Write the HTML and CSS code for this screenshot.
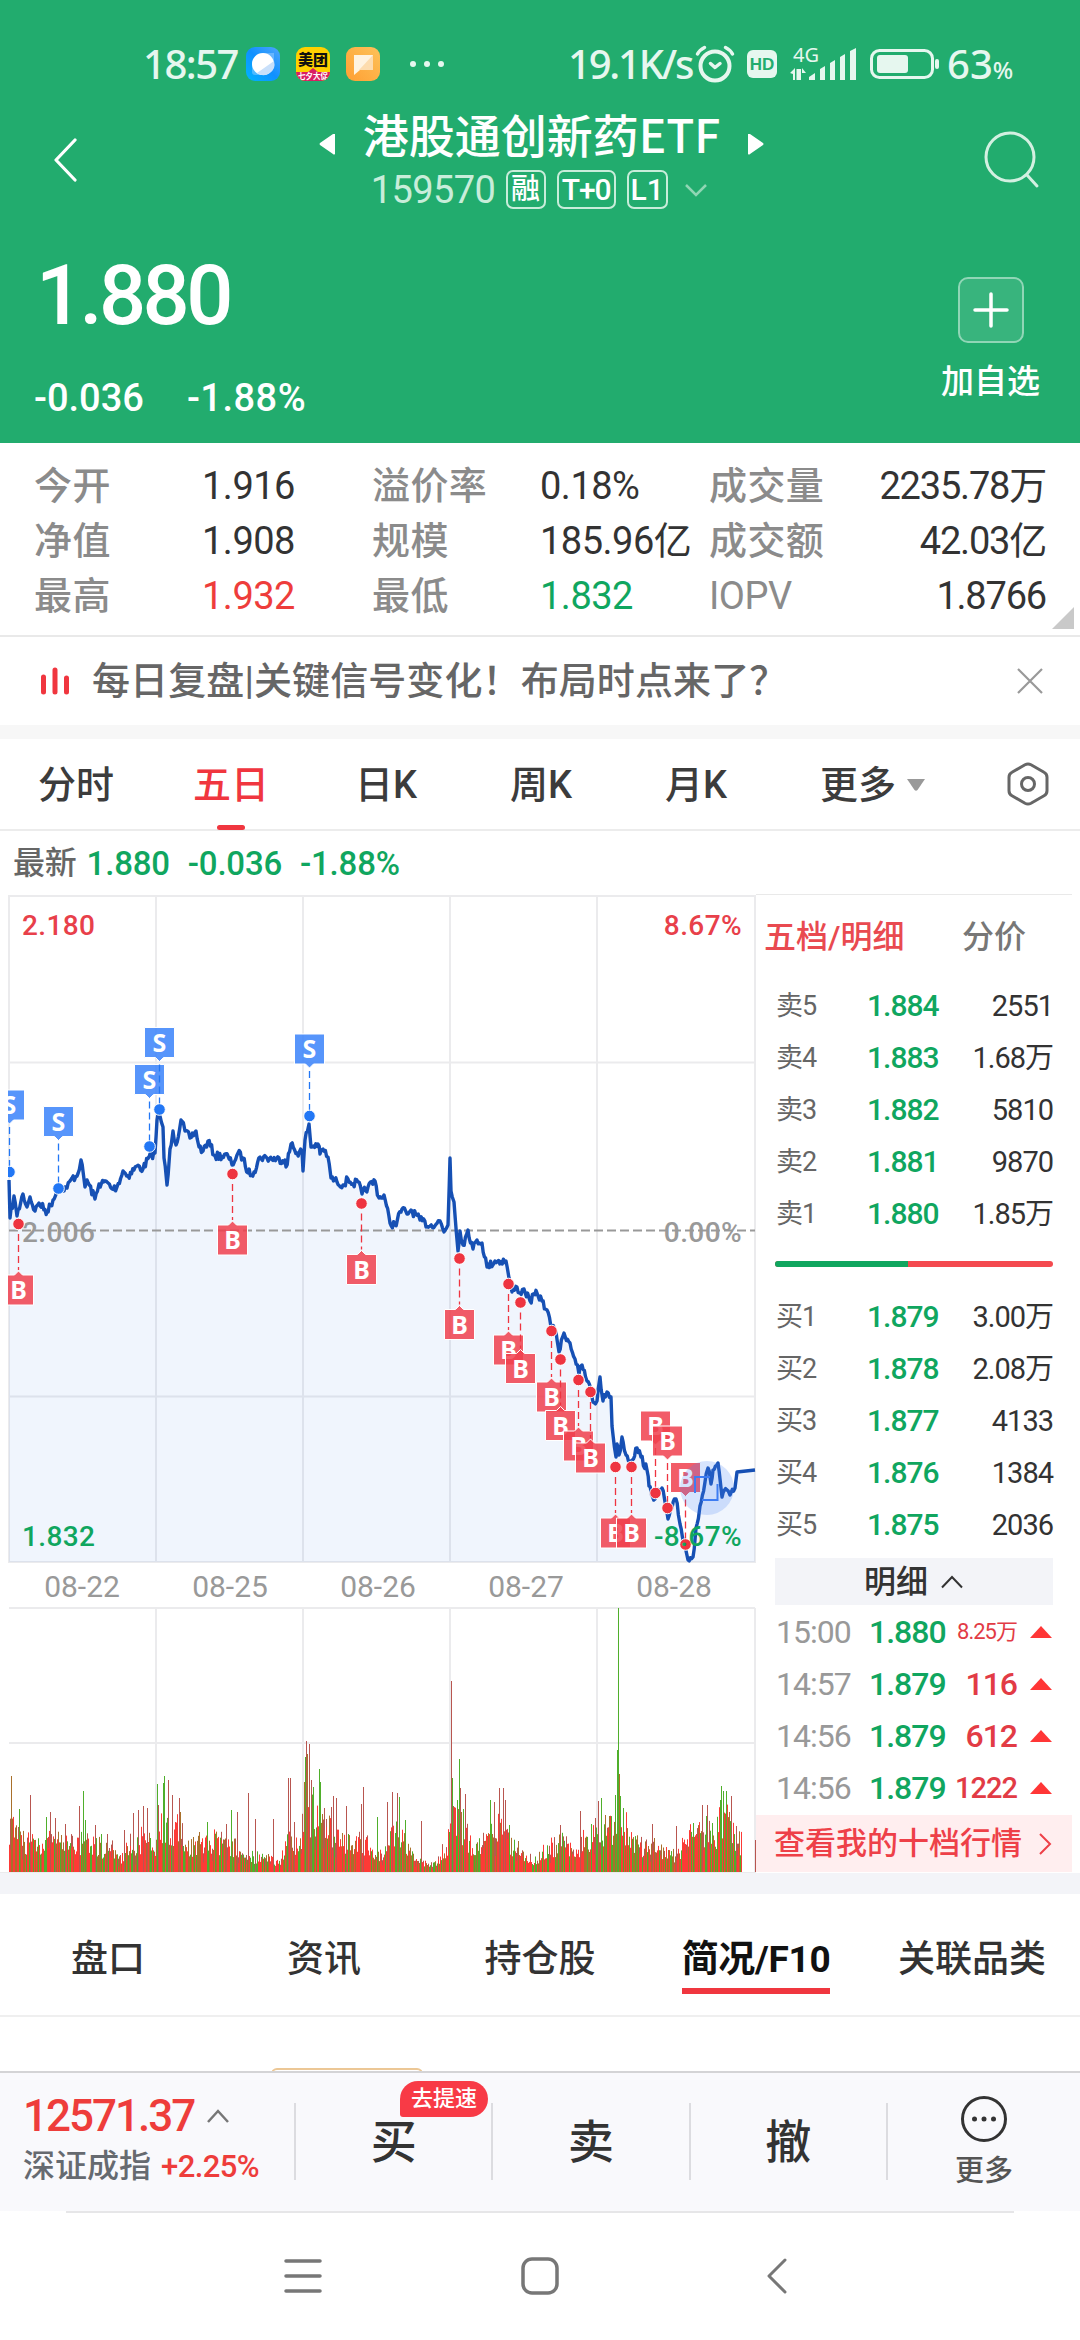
FILE: index.html
```html
<!DOCTYPE html>
<html lang="zh-CN">
<head>
  <meta charset="UTF-8" />
  <meta name="viewport" content="width=device-width, initial-scale=1.0"/>
  <title>港股通创新药ETF 159570</title>
  <link rel="stylesheet" href="styles.css">
</head>
<body>
  <header class="header">
    <div class="status-bar">
      <span class="clock">18:57</span>
      <div class="status-apps">
        <svg width="34" height="34" viewBox="0 0 34 34">
          <defs>
            <linearGradient id="blueApp" x1="0" y1="1" x2="1" y2="0"><stop offset="0" stop-color="#00b4ff"/><stop offset="0.5" stop-color="#1090ff"/><stop offset="1" stop-color="#4fa6fb"/></linearGradient>
            <linearGradient id="orangeApp" x1="0" y1="1" x2="1" y2="0"><stop offset="0" stop-color="#ff9f33"/><stop offset="1" stop-color="#fdc25a"/></linearGradient>
          </defs>
          <rect width="34" height="34" rx="9" fill="url(#blueApp)"/>
          <path d="M6 17a11 11 0 0 1 11-11h11v11a11 11 0 0 1-11 11H9q-3 0-3-3z" fill="#cfe6ff" opacity=".35"/>
          <circle cx="17" cy="17" r="11" fill="#fff"/>
          <path d="M28 14a11 11 0 0 1-17 12z" fill="#c9e0fa"/>
        </svg>
        <svg width="34" height="34" viewBox="0 0 34 34">
          <clipPath id="appClip"><rect width="34" height="34" rx="9"/></clipPath>
          <g clip-path="url(#appClip)">
            <rect width="34" height="34" fill="#ffd100"/>
            <path d="M0 25h12l5-4 5 4h12v9H0z" fill="#d91e63"/>
            <text x="17" y="18" class="app-name">美团</text>
            <text x="17" y="32" class="app-sub">七夕大促</text>
          </g>
        </svg>
        <svg width="34" height="34" viewBox="0 0 34 34">
          <rect width="34" height="34" rx="9" fill="url(#orangeApp)"/>
          <path d="M8 8h19v15H14l-6 5z" fill="#fff3e0"/>
          <path d="M27 8v15H13z" fill="#fddcae"/>
        </svg>
      </div>
      <svg class="status-dots" width="34" height="8" viewBox="0 0 34 8" fill="#e6f7ef"><circle cx="3" cy="4" r="3"/><circle cx="17" cy="4" r="3"/><circle cx="31" cy="4" r="3"/></svg>
      <span class="speed">19.1K/s</span>
      <svg class="alarm" width="40" height="38" viewBox="0 0 40 38" fill="none" stroke="#e6f7ef" stroke-width="4" stroke-linecap="round">
        <circle cx="20" cy="21" r="14.5"/>
        <path d="M2.500 9q2-4 7-6.500M37.500 9q-2-4-7-6.500" stroke-width="3.500"/>
        <path d="M15.500 18.500l4.500 4 5-4" stroke-width="3.500" stroke-linejoin="round"/>
      </svg>
      <span class="hd">HD</span>
      <svg class="signal" width="68" height="44" viewBox="0 -4 68 44" fill="#e6f7ef">
        <text x="3" y="16" class="net-type">4G</text>
        <path d="M0 27l5-5v12H3v-6zM9 23v11h-2.500V23zM9 23h2v11H9zM12 22l4 5h-4z"/>
        <path d="M19 31l6-4v7h-6zM30 23l5-3v14h-5zM40 17l5-3v20h-5zM50 11l5-3v26h-5zM60 5l6-3v32h-6z"/>
      </svg>
      <svg class="battery" width="70" height="32" viewBox="0 0 70 32">
        <rect x="1.500" y="2.500" width="61" height="27" rx="8" fill="none" stroke="#e6f7ef" stroke-width="3"/>
        <rect x="7" y="7" width="31" height="18" rx="3" fill="#e6f7ef"/>
        <rect x="65" y="11" width="4" height="10" rx="2" fill="#e6f7ef"/>
      </svg>
      <span class="charge">63<small>%</small></span>
    </div>

    <div class="title-row">
      <svg class="back" width="24" height="44" viewBox="0 0 24 44"><path d="M22 2L3 22l19 20" fill="none" stroke="#fff" stroke-width="3.200" stroke-linecap="round" stroke-linejoin="round"/></svg>
      <div class="title-box">
        <div class="title">
          <svg width="16" height="22" viewBox="0 0 16 22"><path d="M16 1v20q-1 1-2 0L1 12q-1-1 0-2L14 1z" fill="#fff"/></svg>
          <h1>港股通创新药ETF</h1>
          <svg width="16" height="22" viewBox="0 0 16 22"><path d="M0 1v20q1 1 2 0l13-9q1-1 0-2L2 1z" fill="#fff"/></svg>
        </div>
        <div class="subtitle">
          <span class="code">159570</span>
          <span class="tag tag-rong">融</span>
          <span class="tag tag-t0">T+0</span>
          <span class="tag tag-l1">L1</span>
          <svg width="24" height="14" viewBox="0 0 24 14"><path d="M2 2l10 10L22 2" fill="none" stroke="#8fd6b4" stroke-width="2.500"/></svg>
        </div>
      </div>
      <svg class="search" width="56" height="58" viewBox="0 0 56 58" fill="none" stroke="#d3f0e1" stroke-width="3"><circle cx="26" cy="26" r="24"/><path d="M43 44l10 11" stroke-linecap="round"/></svg>
    </div>

    <div class="quote">
      <div class="quote-left">
        <div class="price">1.880</div>
        <div class="change"><span>-0.036</span><span>-1.88%</span></div>
      </div>
      <div class="add">
        <div class="add-btn"><svg width="36" height="36" viewBox="0 0 36 36"><path d="M18 2v32M2 18h32" stroke="#fff" stroke-width="3.500" stroke-linecap="round"/></svg></div>
        <span>加自选</span>
      </div>
    </div>
  </header>

  <section class="stats">
    <span class="label">今开</span><span>1.916</span><span class="label">溢价率</span><span>0.18%</span><span class="label">成交量</span><span class="end">2235.78万</span>
    <span class="label">净值</span><span>1.908</span><span class="label">规模</span><span>185.96亿</span><span class="label">成交额</span><span class="end">42.03亿</span>
    <span class="label">最高</span><span class="red">1.932</span><span class="label">最低</span><span class="green">1.832</span><span class="label iopv">IOPV</span><span class="end">1.8766</span>
    <svg class="corner" width="22" height="22" viewBox="0 0 22 22"><path d="M22 0v22H0z" fill="#c9c9c9"/></svg>
  </section>

  <section class="banner">
    <svg width="28" height="28" viewBox="0 0 28 28" stroke="#f0363f" stroke-width="5" stroke-linecap="round"><path d="M2.500 10v15M14 3v22M25.500 11v14"/></svg>
    <p>每日复盘|关键信号变化！布局时点来了？</p>
    <svg class="close" width="26" height="26" viewBox="0 0 26 26"><path d="M1 1l24 24M25 1L1 25" stroke="#999" stroke-width="2.200"/></svg>
  </section>

  <nav class="period-tabs">
    <a>分时</a>
    <a class="active">五日</a>
    <a>日K</a>
    <a>周K</a>
    <a>月K</a>
    <a class="more">更多<svg width="20" height="14" viewBox="0 0 20 14"><path d="M1 1h18l-7.500 11q-1.500 1.500-3 0z" fill="#999"/></svg></a>
    <svg class="setting" width="42" height="44" viewBox="0 0 42 44" fill="none" stroke="#666" stroke-width="3"><path d="M18 2.800q3-1.600 6 0l13 7.400q3 1.600 3 5v13.600q0 3.400-3 5l-13 7.400q-3 1.600-6 0L5 33.800q-3-1.600-3-5V15.200q0-3.400 3-5z"/><circle cx="21" cy="22" r="6.500"/></svg>
  </nav>

  <div class="latest">
    <span class="latest-label">最新</span><span>1.880</span><span>-0.036</span><span>-1.88%</span>
  </div>

  <main class="board">
    <svg id="chart" class="chart" width="756" height="979" viewBox="0 4 756 979"></svg>

    <aside class="depth">
      <div class="depth-tabs"><span class="on">五档/明细</span><span>分价</span></div>
      <ul class="levels">
        <li><span>卖5</span><b>1.884</b><i>2551</i></li>
        <li><span>卖4</span><b>1.883</b><i>1.68万</i></li>
        <li><span>卖3</span><b>1.882</b><i>5810</i></li>
        <li><span>卖2</span><b>1.881</b><i>9870</i></li>
        <li><span>卖1</span><b>1.880</b><i>1.85万</i></li>
      </ul>
      <div class="ratio"><div style="width: 48%"></div></div>
      <ul class="levels">
        <li><span>买1</span><b>1.879</b><i>3.00万</i></li>
        <li><span>买2</span><b>1.878</b><i>2.08万</i></li>
        <li><span>买3</span><b>1.877</b><i>4133</i></li>
        <li><span>买4</span><b>1.876</b><i>1384</i></li>
        <li><span>买5</span><b>1.875</b><i>2036</i></li>
      </ul>
      <div class="detail-head">明细<svg width="24" height="14" viewBox="0 0 24 14"><path d="M2 12.500L12 2l10 10.500" fill="none" stroke="#333" stroke-width="2"/></svg></div>
      <ul class="ticks">
        <li><span>15:00</span><b>1.880</b><i class="small">8.25万</i><em></em></li>
        <li><span>14:57</span><b>1.879</b><i>116</i><em></em></li>
        <li><span>14:56</span><b>1.879</b><i>612</i><em></em></li>
        <li><span>14:56</span><b>1.879</b><i class="mid">1222</i><em></em></li>
      </ul>
      <div class="ten-levels">查看我的十档行情<svg width="14" height="24" viewBox="0 0 14 24"><path d="M2 2l10 10L2 22" fill="none" stroke="#ee4048" stroke-width="2"/></svg></div>
    </aside>
  </main>

  <nav class="info-tabs">
    <a>盘口</a>
    <a>资讯</a>
    <a>持仓股</a>
    <a class="active"><span>简况/F10</span></a>
    <a>关联品类</a>
  </nav>
  <div class="info-body"><div class="chip"></div></div>

  <footer class="trade-bar">
    <div class="index">
      <div class="index-value">12571.37<svg width="24" height="16" viewBox="0 0 24 16"><path d="M2 14L12 3l10 11" fill="none" stroke="#777" stroke-width="2.500"/></svg></div>
      <div class="index-name">深证成指<span>+2.25%</span></div>
    </div>
    <div class="trade">买<span class="badge">去提速</span></div>
    <div class="trade">卖</div>
    <div class="trade">撤</div>
    <div class="more-btn">
      <svg width="48" height="48" viewBox="0 0 48 48"><circle cx="24" cy="24" r="21.500" fill="none" stroke="#333" stroke-width="3"/><g fill="#333"><circle cx="14.500" cy="24" r="2.500"/><circle cx="24" cy="24" r="2.500"/><circle cx="33.500" cy="24" r="2.500"/></g></svg>
      <span>更多</span>
    </div>
  </footer>

  <div class="sys-nav">
    <svg width="38" height="36" viewBox="0 0 38 36" stroke="#777" stroke-width="3.500" stroke-linecap="round"><path d="M2 3h34M2 18h34M2 33h34"/></svg>
    <svg width="38" height="38" viewBox="0 0 38 38"><rect x="2" y="2" width="34" height="34" rx="9" fill="none" stroke="#777" stroke-width="3.500"/></svg>
    <svg width="20" height="36" viewBox="0 0 20 36"><path d="M18 2L2 18l16 16" fill="none" stroke="#777" stroke-width="3" stroke-linecap="round" stroke-linejoin="round"/></svg>
  </div>

  <script src="chart.js"></script>
</body>
</html>
```
FILE: styles.css
```css
* {
  margin: 0;
  padding: 0;
  box-sizing: border-box;
}

body {
  width: 1080px;
  height: 2340px;
  overflow: hidden;
  background: #fff;
  color: #333;
  font-family: Roboto, "Noto Sans CJK SC", sans-serif;
  line-height: 1;
}

svg {
  display: block;
  flex: none;
}

ul {
  list-style: none;
}

b,
i,
em {
  font-weight: 500;
  font-style: normal;
}

.red {
  color: #ee3d3b;
}

.green {
  color: #10a65f;
}

/* header */
.header {
  height: 443px;
  background: #22ac6e;
  color: #fff;
}

.status-bar {
  display: flex;
  align-items: center;
  height: 108px;
  padding: 20px 0 0 143px;
  color: #e6f7ef;
  font-family: "Noto Sans", sans-serif;
  font-size: 40px;
  font-weight: 500;
}

.clock {
  width: 103px;
  letter-spacing: -1.5px;
}

.status-apps {
  display: flex;
  gap: 16px;
}

.app-name {
  font: 900 15px "Noto Sans CJK SC", sans-serif;
  text-anchor: middle;
  fill: #111;
}

.app-sub {
  font: 700 7.500px "Noto Sans CJK SC", sans-serif;
  text-anchor: middle;
  fill: #fff;
}

.status-dots {
  margin-left: 30px;
}

.speed {
  width: 127px;
  margin-left: 124px;
  letter-spacing: -2.2px;
}

.alarm {
  margin-right: 12px;
}

.hd {
  width: 30px;
  height: 28px;
  border-radius: 6px;
  background: #e6f7ef;
  color: #22ac6e;
  font: 700 17px/29px "Liberation Sans", sans-serif;
  text-align: center;
}

.signal {
  margin-left: 13px;
}

.net-type {
  font: 20px "Noto Sans", sans-serif;
}

.battery {
  margin: 0 7px 0 12px;
}

.charge small {
  font-size: 24px;
}

.title-row {
  display: flex;
  justify-content: space-between;
  height: 110px;
  padding: 0 40px 0 53px;
}

.back {
  margin-top: 30px;
}

.search {
  margin-top: 23px;
}

.title-box {
  margin-left: 22px;
}

.title {
  display: flex;
  align-items: center;
  justify-content: center;
  gap: 28px;
  height: 56px;
}

.title svg {
  margin-top: 16px;
}

.title h1 {
  margin-top: -6px;
  font: 500 46px/56px "Noto Sans CJK SC", sans-serif;
}

.subtitle {
  display: flex;
  align-items: center;
  margin-left: 52px;
  padding-top: 6px;
}

.code {
  width: 135px;
  color: #c8edda;
  font-size: 38px;
  letter-spacing: -0.6px;
}

.tag {
  height: 39px;
  margin-right: 11px;
  border: 2px solid #c8edda;
  border-radius: 7px;
  font-size: 30px;
  font-weight: 500;
  line-height: 35px;
  text-align: center;
}

.tag-rong {
  width: 40px;
  font-size: 29px;
}

.tag-t0 {
  width: 59px;
  letter-spacing: -1px;
}

.tag-l1 {
  width: 41px;
  margin-right: 16px;
}

.quote {
  display: flex;
  justify-content: space-between;
  padding: 44px 40px 0 34px;
}

.price {
  margin-left: 2px;
  font-size: 83px;
  font-weight: 500;
  line-height: 68px;
  letter-spacing: -3.6px;
}

.change {
  display: flex;
  gap: 43px;
  margin-top: 49px;
  font-size: 38px;
  font-weight: 500;
}

.change span:last-child {
  letter-spacing: 0.5px;
}

.add {
  display: flex;
  flex-direction: column;
  align-items: center;
  padding-top: 15px;
  font-size: 33px;
  font-weight: 500;
}

.add-btn {
  display: flex;
  align-items: center;
  justify-content: center;
  width: 66px;
  height: 66px;
  margin-bottom: 22px;
  border: 2px solid #90d6b6;
  border-radius: 10px;
  background: #38b47d;
}

/* stats */
.stats {
  display: grid;
  position: relative;
  grid-template-columns: 168px 170px 168px 169px 120px 217px;
  grid-auto-rows: 55px;
  align-items: center;
  height: 194px;
  padding: 15px 0 0 34px;
  border-bottom: 2px solid #e9e9e9;
  font-size: 38px;
  letter-spacing: -0.5px;
  white-space: nowrap;
}

.stats .label {
  color: #8b8b8b;
  font-weight: 500;
  letter-spacing: 0.4px;
}

.stats .iopv {
  font-weight: 400;
  letter-spacing: -0.5px;
}

.stats .end {
  text-align: right;
  letter-spacing: -1.2px;
}

.corner {
  position: absolute;
  right: 6px;
  bottom: 6px;
}

.banner {
  display: flex;
  align-items: center;
  height: 102px;
  padding: 0 37px 0 41px;
  border-bottom: 14px solid #f7f7f7;
  color: #666;
  font-size: 38px;
  font-weight: 500;
}

.banner p {
  flex: 1;
  margin-left: 23px;
  letter-spacing: 0.1px;
}

/* period tabs */
.period-tabs {
  display: flex;
  align-items: center;
  height: 92px;
  padding-left: 38px;
  border-bottom: 2px solid #ececec;
  color: #3c3c3c;
  font-size: 38px;
  font-weight: 500;
}

.period-tabs a {
  display: flex;
  align-items: center;
  width: 155px;
  height: 90px;
  padding-top: 2px;
}

.period-tabs .active {
  position: relative;
  width: 162px;
  color: #f0363f;
}

.period-tabs .active::after {
  content: "";
  position: absolute;
  left: 24px;
  bottom: -1px;
  width: 28px;
  height: 5px;
  border-radius: 3px;
  background: #f0363f;
}

.period-tabs .more {
  width: 187px;
}

.more svg {
  margin-left: 10px;
}

.latest {
  display: flex;
  align-items: center;
  gap: 18px;
  height: 63px;
  padding: 1px 0 0 13px;
  color: #10a65f;
  font-size: 33px;
  font-weight: 500;
}

.latest span {
  letter-spacing: -0.2px;
}

.latest-label {
  margin-right: -8px;
  color: #666;
  font-size: 32px;
}

/* chart and depth */
.board {
  display: flex;
  height: 979px;
}

.axis {
  font: 500 28px Roboto, sans-serif;
  letter-spacing: 0.4px;
}

.dates {
  font: 30px Roboto, sans-serif;
  fill: #999;
  text-anchor: middle;
}

.flag-text {
  font: 700 25px "Noto Sans", sans-serif;
  text-anchor: middle;
  fill: #fff;
}

.depth {
  width: 316px;
  border-top: 1px solid #e9e9e9;
}

.depth-tabs {
  display: flex;
  justify-content: space-between;
  padding: 26px 46px 0 8px;
  color: #777;
  font-size: 32px;
  font-weight: 500;
}

.depth-tabs .on {
  color: #e94a50;
}

.levels {
  margin: 0 20px 0 20px;
}

.depth-tabs + .levels {
  margin-top: 27px;
}

.levels li {
  display: grid;
  grid-template-columns: 91px 1fr auto;
  align-items: center;
  height: 52px;
  font-size: 30px;
  letter-spacing: -1px;
}

.levels span {
  color: #666;
  font-size: 27px;
}

.levels b {
  color: #10a65f;
}

.levels i {
  margin-right: -1px;
  font-size: 29px;
  font-weight: 400;
}

.ratio {
  height: 6px;
  margin: 21px 19px 24px;
  border-radius: 3px;
  background: #f44a4f;
}

.ratio div {
  height: 6px;
  border-radius: 3px 0 0 3px;
  background: #10a65f;
}

.detail-head {
  display: flex;
  align-items: center;
  justify-content: center;
  gap: 12px;
  height: 47px;
  margin: 7px 19px 0;
  background: #f3f4f8;
  font-size: 32px;
  font-weight: 500;
}

.ticks {
  margin: 1px 20px 0 20px;
}

.ticks li {
  display: grid;
  grid-template-columns: 93px 78px 1fr 35px;
  align-items: center;
  height: 52px;
  font-size: 32px;
  letter-spacing: -1px;
}

.ticks span {
  color: #999;
}

.ticks b {
  color: #10a65f;
}

.ticks i {
  color: #e23b45;
  text-align: right;
}

.ticks .small {
  font-size: 22px;
  font-weight: 400;
}

.ticks .mid {
  font-size: 29px;
}

.ticks em {
  justify-self: end;
  border: 11.500px solid transparent;
  border-top: 0;
  border-bottom: 12px solid #ff3636;
}

.ten-levels {
  display: flex;
  align-items: center;
  justify-content: space-between;
  height: 57px;
  margin-top: 1px;
  padding: 0 20px 0 18px;
  background: #ffeeef;
  color: #ee4048;
  font-size: 31px;
  font-weight: 500;
}

/* info tabs */
.info-tabs {
  display: flex;
  height: 144px;
  border-top: 21px solid #f3f4f8;
  border-bottom: 2px solid #efefef;
  font-size: 37px;
  font-weight: 500;
}

.info-tabs a {
  width: 216px;
  padding-top: 47px;
  text-align: center;
}

.info-tabs .active {
  color: #111;
  font-weight: 700;
}

.info-tabs .active span {
  display: inline-block;
  height: 53px;
  border-bottom: 6px solid #f0363f;
  white-space: nowrap;
  letter-spacing: -0.3px;
}

.info-body {
  height: 54px;
  overflow: hidden;
}

.chip {
  width: 152px;
  height: 30px;
  margin: 51px 0 0 271px;
  border: 2px solid #ecc795;
  border-radius: 6px;
}

/* bottom bar */
.trade-bar {
  display: flex;
  height: 140px;
  padding: 30px 0 31px;
  border-top: 2px solid #d4d4d6;
  background: #f9f9fc;
}

.index {
  width: 294px;
  padding-left: 23px;
}

.index-value {
  display: flex;
  align-items: center;
  gap: 12px;
  margin-top: -9px;
  color: #ee3d3b;
  font-size: 44px;
  font-weight: 500;
  letter-spacing: -2px;
}

.index-name {
  margin-top: 12px;
  color: #666a70;
  font-size: 32px;
  font-weight: 500;
  white-space: nowrap;
}

.index-name span {
  margin-left: 10px;
  color: #ee3d3b;
  font-size: 31px;
  letter-spacing: -0.6px;
}

.trade {
  display: flex;
  position: relative;
  align-items: center;
  justify-content: center;
  width: 197.300px;
  border-left: 2px solid #dcdce0;
  font-size: 46px;
  font-weight: 500;
}

.badge {
  position: absolute;
  left: 104px;
  top: -22px;
  width: 88px;
  height: 36px;
  border-radius: 18px 18px 18px 3px;
  background: #f83a46;
  color: #fff;
  font-size: 22px;
  line-height: 35px;
  text-align: center;
}

.more-btn {
  display: flex;
  flex: 1;
  flex-direction: column;
  align-items: center;
  gap: 14px;
  border-left: 2px solid #dcdce0;
  color: #555;
  font-size: 29px;
  font-weight: 500;
}

.more-btn svg {
  margin-top: -8px;
}

.sys-nav {
  display: flex;
  align-items: center;
  height: 130px;
  margin: 0 66px;
  padding: 0 0 2px 218px;
  border-top: 2px solid #e6e6e8;
}

.sys-nav svg + svg {
  margin-left: 199px;
}

.sys-nav svg:last-child {
  margin-left: 208px;
}
```
FILE: chart.js
```js
const svg = document.getElementById("chart");
const LEFT = 9, RIGHT = 755;
const days = ["08-22", "08-25", "08-26", "08-27", "08-28"];

const price = [
  [9,290],[10,328],[14,306],[17,326],[23,304],[27,317],[30,307],[35,321],[39,313],[47,322],[53,310],[58,299],
  [67,298],[72,288],[77,286],[81,270],[85,297],[87,290],[95,309],[99,294],[107,292],[112,299],[117,297],[123,281],
  [128,286],[137,276],[143,279],[149,267],[155,263],[157,230],[159,223],[163,237],[164,268],[167,295],[170,259],
  [173,241],[176,255],[181,230],[185,241],[190,248],[196,241],[199,257],[203,261],[208,251],[215,266],[228,266],
  [232,275],[238,263],[243,268],[248,283],[254,282],[260,267],[267,268],[285,270],[286,277],[291,254],[297,263],
  [302,261],[303,281],[305,250],[309,234],[311,257],[318,254],[320,264],[323,259],[328,267],[331,288],[337,292],
  [343,295],[348,289],[353,294],[358,292],[362,304],[368,297],[375,291],[379,308],[384,305],[390,333],[395,335],
  [402,319],[407,324],[411,320],[420,330],[430,336],[440,331],[444,342],[448,335],[450,268],[451,301],[454,312],
  [458,361],[460,341],[463,355],[468,340],[473,359],[477,350],[482,353],[487,377],[495,371],[506,371],[509,388],
  [512,402],[517,397],[520,403],[524,399],[530,411],[537,403],[542,411],[547,420],[551,437],[556,442],[559,462],
  [564,443],[570,453],[575,469],[579,484],[582,475],[587,491],[591,500],[593,512],[597,511],[600,487],[603,511],
  [607,502],[611,507],[612,536],[616,567],[617,554],[619,565],[622,547],[626,565],[631,571],[637,558],[641,567],
  [647,580],[649,596],[655,609],[662,598],[665,612],[668,629],[672,618],[676,609],[680,634],[685,656],[688,670],
  [693,667],[696,638],[700,616],[705,592],[708,578],[711,594],[713,580],[718,573],[720,589],[722,607],[727,600],
  [730,605],[735,598],[737,582],[755,580]
];

// x, dot y; S flags sit above the dot, B flags below unless "up" is set
const sells = [[9.5,282],[58.5,298.5],[149.5,256.5],[159.5,219.5],[309.5,226]];
const buys = [
  [18.5,334],[232.5,284],[361.5,313.5],[459.5,368.5],[508.5,394],[520.5,412.5],[551.5,441],[560.5,469.5],
  [578.5,490],[590.5,502],[615.5,577],[631.5,577],[655.5,603,"up"],[667.5,618,"up"],[685.5,654.5,"up"]
];

// typical volume height along the axis
const volumeBase = [
  [9,45],[20,34],[60,30],[90,30],[112,24],[119,12],[128,28],[145,36],[154,22],[160,55],[175,48],[188,28],[215,32],
  [232,28],[245,18],[280,11],[288,38],[298,24],[303,60],[312,68],[322,45],[335,40],[350,32],[362,30],[376,24],
  [383,14],[392,40],[402,36],[412,16],[422,9],[436,10],[447,30],[454,58],[464,46],[474,22],[486,32],[495,50],
  [506,34],[520,22],[535,12],[550,28],[562,30],[575,24],[590,38],[600,46],[612,52],[622,54],[632,30],[645,26],
  [655,26],[672,16],[685,32],[698,47],[708,46],[716,42],[724,58],[731,44],[742,30]
];
const volumePeaks = [
  [11,96,"m"],[19,63,"g"],[30,77,"d"],[46,55,"g"],[50,60,"d"],[55,54,"d"],[65,48,"d"],[79,66,"d"],[83,81,"g"],
  [85,52,"g"],[95,47,"d"],[101,38,"g"],[107,38,"d"],[124,42,"d"],[133,59,"d"],[138,62,"d"],[143,66,"d"],[147,64,"d"],
  [157,88,"g"],[158,67,"d"],[163,89,"g"],[164,96,"g"],[168,92,"d"],[172,77,"d"],[179,74,"d"],[180,60,"m"],
  [199,40,"m"],[207,50,"g"],[226,48,"d"],[231,62,"g"],[237,60,"d"],[248,79,"d"],[255,53,"d"],[273,53,"d"],
  [288,94,"d"],[290,94,"d"],[294,50,"d"],[304,90,"m"],[305,115,"g"],[306,131,"d"],[307,118,"m"],[309,128,"d"],
  [311,92,"d"],[313,85,"g"],[319,103,"g"],[320,90,"g"],[324,64,"d"],[331,65,"d"],[333,76,"d"],[336,74,"d"],
  [346,66,"d"],[361,68,"d"],[363,85,"d"],[377,55,"g"],[387,70,"d"],[392,80,"d"],[397,79,"d"],[399,75,"g"],
  [405,52,"g"],[421,51,"d"],[451,191,"d"],[452,94,"g"],[453,66,"d"],[457,72,"g"],[459,113,"g"],[460,84,"d"],
  [463,63,"g"],[465,78,"d"],[490,72,"g"],[494,70,"d"],[499,84,"d"],[503,84,"d"],[505,72,"d"],[509,47,"g"],
  [560,47,"d"],[580,61,"d"],[591,48,"g"],[595,54,"d"],[598,71,"d"],[601,74,"g"],[605,57,"m"],[609,56,"m"],
  [615,77,"g"],[617,122,"g"],[618,264,"g"],[619,98,"m"],[620,76,"g"],[623,64,"g"],[652,48,"d"],[676,46,"d"],
  [693,49,"g"],[702,67,"d"],[707,67,"d"],[720,72,"g"],[721,86,"g"],[723,81,"g"],[726,81,"g"],[729,60,"m"],
  [731,76,"d"],[736,46,"d"]
];
const colors = { r: "#fd3a36", d: "#b85650", g: "#4faf2b", m: "#a9702b" };

let seed = 7;
function rand() {
  seed = (seed * 16807) % 2147483647;
  return seed / 2147483647;
}

function at(points, x) {
  for (let i = 1; i < points.length; i++) {
    const [x0, y0] = points[i - 1];
    const [x1, y1] = points[i];
    if (x <= x1) return y0 + (y1 - y0) * (x - x0) / (x1 - x0);
  }
  return points[points.length - 1][1];
}

let out = "";

// grid
out += `<g fill="none" stroke="#ebebed" stroke-width="2">
  <path d="M8 6H756M9 172.500H755M9 506.500H755M9 672H755M9 5V673M755 5V673"/>
  <path d="M156 5V672M303 5V672M450 5V672M597 5V672"/>
  <path d="M9 718H755M9 853H755M156 718V982M303 718V982M450 718V982M597 718V982M755 718V982"/>
  <path d="M0 982.500H756" stroke-width="1"/>
</g>`;

// price line and its fill
const line = [];
price.forEach(([x, y], i) => {
  if (i > 0 && x < 737) {
    const [px, py] = price[i - 1];
    for (let sx = px + 1.2; sx < x - 0.7; sx += 1.2) {
      line.push([sx, py + (y - py) * (sx - px) / (x - px) + (rand() - 0.5) * 8]);
    }
  }
  line.push([x, y]);
});
const d = line.map(p => p[0].toFixed(1) + " " + p[1].toFixed(1)).join("L");
out += `<path d="M${d}L755 672L9 672Z" fill="#2f6be0" fill-opacity=".07"/>`;
out += `<path d="M9 340.500H755" stroke="#999" stroke-width="2" stroke-dasharray="9 4"/>`;
out += `<path d="M${d}" fill="none" stroke="#1650b4" stroke-width="3.400" stroke-linejoin="round"/>`;
out += `<text class="axis" x="22" y="352" fill="#999">2.006</text>
  <text class="axis" x="742" y="352" fill="#999" text-anchor="end">0.00%</text>`;

function marker(x, y, above, text, color, dot) {
  const top = above ? y - 82 : y + 51;
  const shape = above
    ? `M${x - 15} ${top}h30v30h-11l-4 4l-4 -4h-11z`
    : `M${x - 15} ${top}h11l4 -4l4 4h11v30h-30z`;
  const stem = above ? `M${x} ${y - 5}V${top + 37}` : `M${x} ${y + 10}V${top - 5}`;
  return `<path d="${stem}" stroke="${dot}" stroke-width="1.300" stroke-dasharray="7 4"/>
    <circle cx="${x}" cy="${y}" r="5.800" fill="${dot}" stroke="#fff" stroke-width="1"/>
    <path d="${shape}" fill="${color}" fill-opacity=".85" stroke="#fff" stroke-width="1"/>
    <text class="flag-text" x="${x}" y="${top + 24}">${text}</text>`;
}
out += `<clipPath id="plot"><rect x="8" y="4" width="748" height="670"/></clipPath><g clip-path="url(#plot)">`;
sells.forEach(([x, y]) => out += marker(x, y, true, "S", "#3a82fa", "#2277f5"));
buys.forEach(([x, y, up]) => out += marker(x, y, up === "up", "B", "#f0404e", "#ee3440"));
out += "</g>";

// latest trade glow
out += `<circle cx="707" cy="598" r="27" fill="#4b86f5" fill-opacity=".22"/>
  <path d="M695 603V587H710M702 610H717.500V594" fill="none" stroke="#3d7cf2" stroke-width="2"/>`;

out += `<text class="axis" x="22" y="45" fill="#e8404a">2.180</text>
  <text class="axis" x="742" y="45" fill="#e8404a" text-anchor="end">8.67%</text>
  <text class="axis" x="22" y="656" fill="#10a65f">1.832</text>
  <text class="axis" x="742" y="656" fill="#10a65f" text-anchor="end">-8.67%</text>`;

days.forEach((day, i) => {
  out += `<text class="dates" x="${82 + i * 148}" y="707">${day}</text>`;
});

// volume bars
for (let x = LEFT; x < 742; x++) {
  const h = at(volumeBase, x) * (0.5 + rand() * 0.85);
  const k = rand();
  const base = h * (0.4 + rand() * 0.5);
  const c = k < 0.36 ? "r" : k < 0.6 ? "g" : k < 0.85 ? "m" : "d";
  out += `<rect x="${x}" y="${(982 - h).toFixed(1)}" width="1" height="${h.toFixed(1)}" fill="${colors[c]}"/>`;
  if (c === "d") {
    out += `<rect x="${x}" y="${(982 - base).toFixed(1)}" width="1" height="${base.toFixed(1)}" fill="${colors.r}"/>`;
  }
}
volumePeaks.forEach(([x, h, c]) => {
  out += `<rect x="${x}" y="${982 - h}" width="1" height="${h}" fill="${colors[c]}"/>`;
});
out += `<rect x="${RIGHT}" y="950" width="1" height="32" fill="${colors.d}"/>`;

svg.innerHTML = out;
```
